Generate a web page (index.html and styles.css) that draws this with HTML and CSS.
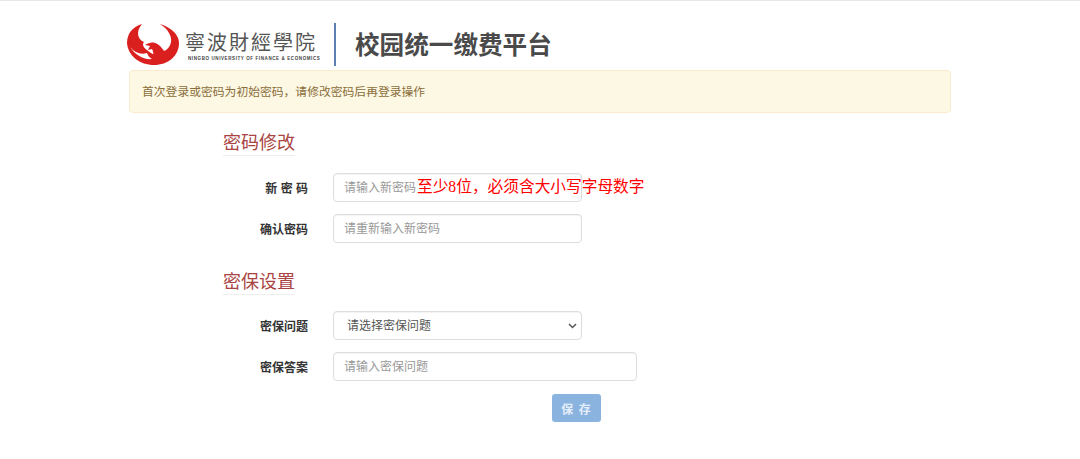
FILE: index.html
```html
<!DOCTYPE html>
<html lang="zh-CN">
<head>
  <meta charset="UTF-8" />
  <title>校园统一缴费平台</title>
  <link rel="stylesheet" href="styles.css">
</head>
<body>
  <div class="container">
    <header class="top">
      <svg class="logo-mark" viewBox="3 3 53 43" aria-hidden="true">
        <path fill="#d9201f" d="M18 4 C8 7 3 14 3 23 C4 36 16 45 30 45 C44 45 55 36 55 23 C55 14 46 7 36 4 C44 9 48 16 47 22 C46 27 43 30 40 31 C38 28 35 24 31 23 C28 22 24 23 21 25 L26 26 L24 30 L28 29 C30 33 30 37 27 40 L33 36 C24 32 16 26 20 22 C13 19 12 11 18 4 Z"/>
        <path fill="#ffffff" d="M6 27 C11 33 17 35 23 33 C24 36 26 38 28 39 C20 40 11 35 6 27 Z"/>
      </svg>
      <div class="logo-text">
        <div class="logo-cn">寧波財經學院</div>
        <div class="logo-en">NINGBO UNIVERSITY OF FINANCE &amp; ECONOMICS</div>
      </div>
      <div class="top-sep"></div>
      <h1 class="top-title">校园统一缴费平台</h1>
    </header>

    <div class="alert">首次登录或密码为初始密码&#xFF0C;请修改密码后再登录操作</div>

    <form class="panel">
      <h3 class="sec-title">密码修改</h3>
      <div class="row">
        <label class="row-label spaced">新 密 码</label>
        <div class="field">
          <input class="ctl ctl-short" type="password" placeholder="请输入新密码">
          <span class="hint">至少8位&#xFF0C;必须含大小写字母数字</span>
        </div>
      </div>
      <div class="row">
        <label class="row-label">确认密码</label>
        <div class="field">
          <input class="ctl ctl-short" type="password" placeholder="请重新输入新密码">
        </div>
      </div>

      <h3 class="sec-title sec-two">密保设置</h3>
      <div class="row">
        <label class="row-label">密保问题</label>
        <div class="field">
          <select class="ctl ctl-short ctl-select">
            <option>请选择密保问题</option>
          </select>
        </div>
      </div>
      <div class="row">
        <label class="row-label">密保答案</label>
        <div class="field">
          <input class="ctl ctl-long" type="text" placeholder="请输入密保问题">
        </div>
      </div>
      <div class="actions">
        <button class="btn-save" type="button" disabled>保 存</button>
      </div>
    </form>
  </div>
</body>
</html>
```

FILE: styles.css
```css
body {
  margin: 0;
  background-color: #ffffff;
  border-top: 1px solid #e8e8e8;
  font-family: "Liberation Sans", "Noto Sans CJK SC", sans-serif;
  font-size: 12px;
  color: #333;
}
.container {
  width: 822px;
  margin-left: 129px;
}
.top {
  display: flex;
  align-items: center;
  height: 44px;
  padding-top: 21px;
  padding-bottom: 4px;
}
.logo-mark {
  width: 53px;
  height: 43px;
  margin-left: -2px;
  flex: none;
}
.logo-text {
  margin: 4px 0 0 5px;
  width: 130px;
  flex: none;
}
.logo-cn {
  font-size: 20px;
  line-height: 24px;
  letter-spacing: 2px;
  color: #555;
  white-space: nowrap;
}
.logo-en {
  margin-left: 3px;
  font-size: 4.500px;
  font-weight: bold;
  line-height: 7px;
  letter-spacing: 0.600px;
  color: #444;
  white-space: nowrap;
}
.top-sep {
  width: 2px;
  height: 43px;
  margin-left: 19px;
  background-color: #5b7fae;
  flex: none;
}
.top-title {
  margin: 0 0 2px 19px;
  font-size: 24.600px;
  font-weight: bold;
  color: #4a4a4a;
  white-space: nowrap;
}
.alert {
  height: 41px;
  line-height: 42px;
  padding-left: 12px;
  font-size: 11.800px;
  background-color: #fcf8e3;
  border: 1px solid #faebcc;
  border-radius: 4px;
  color: #8a6d3b;
}
.panel {
  padding-left: 94px;
}
.sec-title {
  display: inline-block;
  margin: 18px 0 0;
  font-size: 18px;
  font-weight: normal;
  line-height: 24px;
  color: #a94442;
  border-bottom: 1px solid #eee;
}
.sec-two {
  margin-top: 15px;
}
.row {
  display: flex;
  align-items: center;
  margin-bottom: 12px;
}
.sec-title + .row {
  margin-top: 17px;
}
.sec-two + .row {
  margin-top: 16px;
}
.row-label {
  width: 85px;
  text-align: right;
  font-weight: bold;
  flex: none;
}
.field {
  position: relative;
  margin-left: 25px;
}
.ctl {
  display: block;
  height: 29px;
  padding: 0 10px;
  font-family: inherit;
  font-size: 12px;
  color: #555;
  background-color: #fff;
  border: 1px solid #ddd;
  border-radius: 4px;
  box-sizing: border-box;
  box-shadow: inset 0 1px 1px rgba(0,0,0,0.05);
}
.ctl::placeholder {
  color: #999;
}
.ctl-short {
  width: 249px;
}
.ctl-long {
  width: 304px;
}
.ctl-select {
  padding-left: 13px;
  appearance: none;
  background-image: url("data:image/svg+xml,%3Csvg xmlns='http://www.w3.org/2000/svg' width='9' height='6'%3E%3Cpath d='M1 1l3.500 3.500L8 1' fill='none' stroke='%23555' stroke-width='1.500'/%3E%3C/svg%3E");
  background-repeat: no-repeat;
  background-position: right 4px center;
}
.hint {
  position: absolute;
  left: 84px;
  top: 3px;
  font-family: "Liberation Serif", "Noto Sans CJK SC", serif;
  font-size: 15.700px;
  line-height: 22px;
  color: #f00;
  white-space: nowrap;
}
.actions {
  padding: 1px 0 0 329px;
}
.btn-save {
  width: 49px;
  height: 28px;
  padding: 0;
  font-family: inherit;
  font-size: 12px;
  font-weight: bold;
  letter-spacing: 1px;
  color: #e4eefa;
  background-color: #8ab3e0;
  border: none;
  border-radius: 3px;
}
```
